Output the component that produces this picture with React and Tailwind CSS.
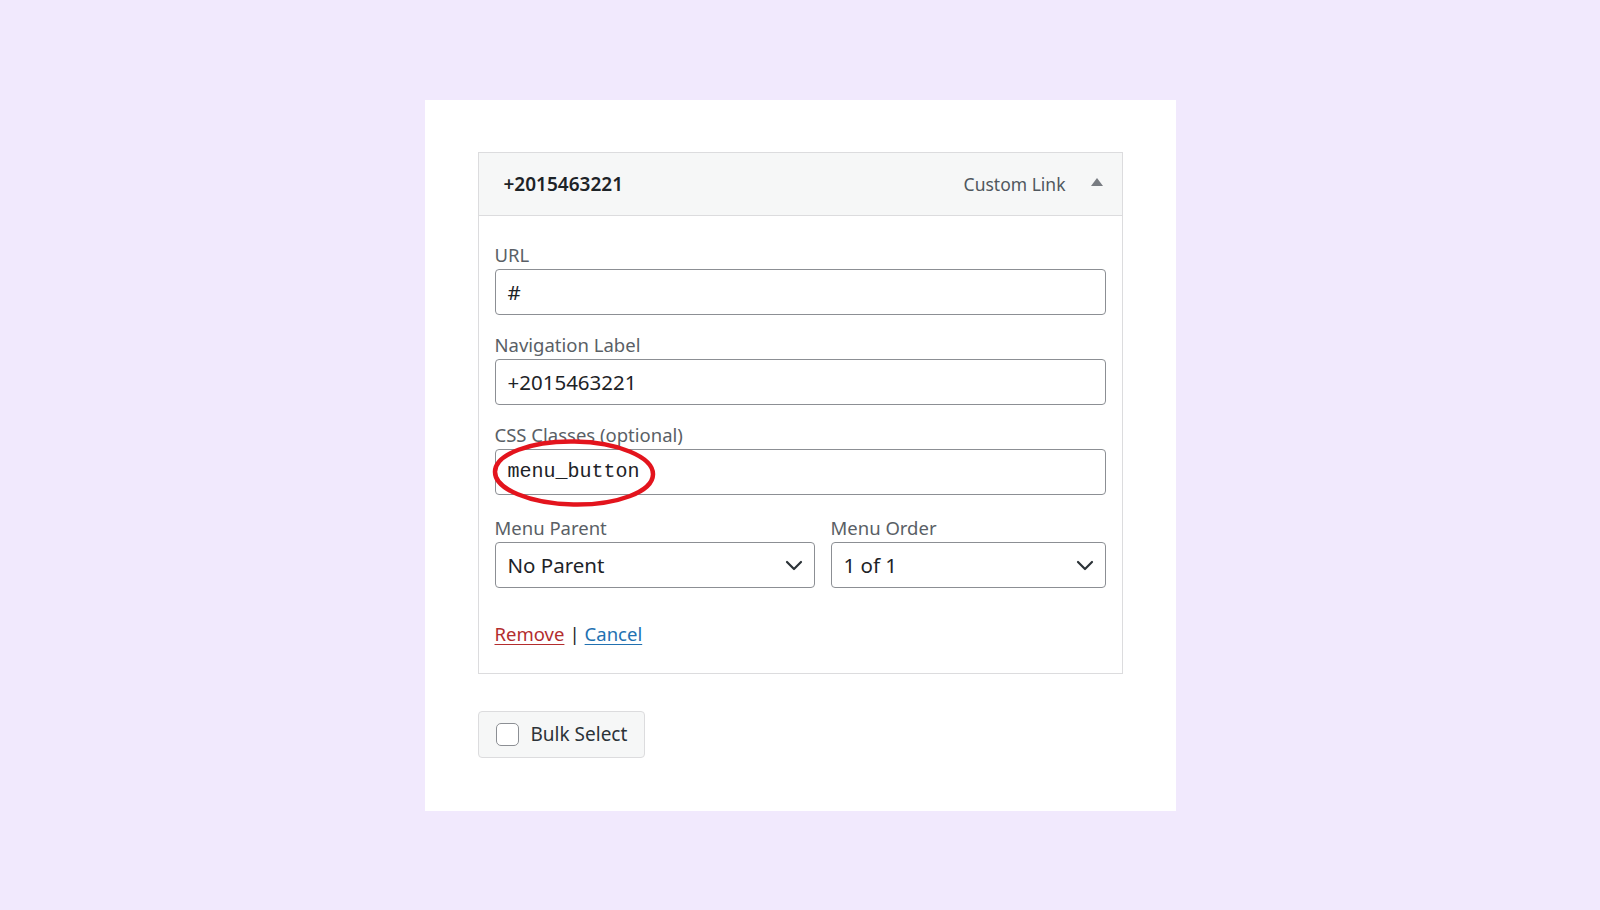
const sans = { fontFamily: '"Noto Sans", "Open Sans", sans-serif' };

function Label({ children }) {
  return <div className="text-[18.5px] leading-[24px] text-[#5a5f66]">{children}</div>;
}

function TextField({ value, mono }) {
  return (
    <div
      className={`mt-[2px] h-[46px] w-full rounded-[4px] border border-[#8c8f94] bg-white px-[12px] flex items-center text-[#1d2327] ${
        mono ? "text-[20px] font-['Liberation_Mono',monospace]" : "text-[20.5px]"
      }`}
    >
      {value}
    </div>
  );
}

function Chevron() {
  return (
    <svg width="18" height="12" viewBox="0 0 18 12" className="shrink-0">
      <path d="M2 3l7 7 7-7" fill="none" stroke="#2c3338" strokeWidth="2.2" strokeLinecap="round" strokeLinejoin="round" />
    </svg>
  );
}

function Select({ value, className }) {
  return (
    <div
      className={`mt-[2px] h-[46px] rounded-[4px] border border-[#8c8f94] bg-white pl-[12px] pr-[11px] flex items-center justify-between text-[20.5px] text-[#1d2327] ${className}`}
    >
      <span>{value}</span>
      <Chevron />
    </div>
  );
}

export default function App() {
  return (
    <div className="min-h-[910px] bg-[#f1e9fd] flex justify-center pt-[100px]" style={sans}>
      <div className="w-[751px] h-[711px] bg-white pt-[52px] pl-[53px]">
        <div className="w-[645px] border border-[#dcdcde]">
          <div className="h-[63px] bg-[#f6f7f7] border-b border-[#dcdcde] flex items-center pl-[25px] pr-[18px]">
            <span className="text-[19px] font-semibold text-[#1d2327]">+2015463221</span>
            <span className="ml-auto text-[17.5px] text-[#50575e]">Custom Link</span>
            <svg width="14" height="10" viewBox="0 0 14 10" className="ml-[24px] -mt-[4px]">
              <path d="M7 1l6 8H1z" fill="#787c82" />
            </svg>
          </div>
          <div className="px-[16px] pt-[27px] pb-[27px]">
            <Label>URL</Label>
            <TextField value="#" />
            <div className="mt-[18px]">
              <Label>Navigation Label</Label>
              <TextField value="+2015463221" />
            </div>
            <div className="mt-[18px] relative">
              <Label>CSS Classes (optional)</Label>
              <TextField value="menu_button" mono />
              <svg
                width="170"
                height="72"
                viewBox="0 0 170 72"
                className="absolute left-[-6px] top-[14px] pointer-events-none"
              >
                <ellipse cx="85" cy="36" rx="79" ry="31.5" fill="none" stroke="#e3141d" strokeWidth="4.5" transform="rotate(1 85 36)" />
              </svg>
            </div>
            <div className="mt-[21px] flex gap-[16px]">
              <div className="w-[320px]">
                <Label>Menu Parent</Label>
                <Select value="No Parent" className="w-[320px]" />
              </div>
              <div className="flex-1">
                <Label>Menu Order</Label>
                <Select value="1 of 1" className="w-full" />
              </div>
            </div>
            <div className="mt-[34px] text-[18.5px] leading-[24px] text-[#1d2327]">
              <a className="text-[#b32d2e] underline underline-offset-[3px]">Remove</a>
              <span className="mx-[5px]">|</span>
              <a className="text-[#2271b1] underline underline-offset-[3px]">Cancel</a>
            </div>
          </div>
        </div>
        <div className="mt-[37px] w-[167px] h-[47px] rounded-[4px] border border-[#dcdcde] bg-[#f6f7f7] flex items-center pl-[17px]">
          <div className="w-[23px] h-[23px] rounded-[5px] border border-[#8c8f94] bg-white" />
          <span className="ml-[12px] text-[19px] text-[#2c3338]">Bulk Select</span>
        </div>
      </div>
    </div>
  );
}
